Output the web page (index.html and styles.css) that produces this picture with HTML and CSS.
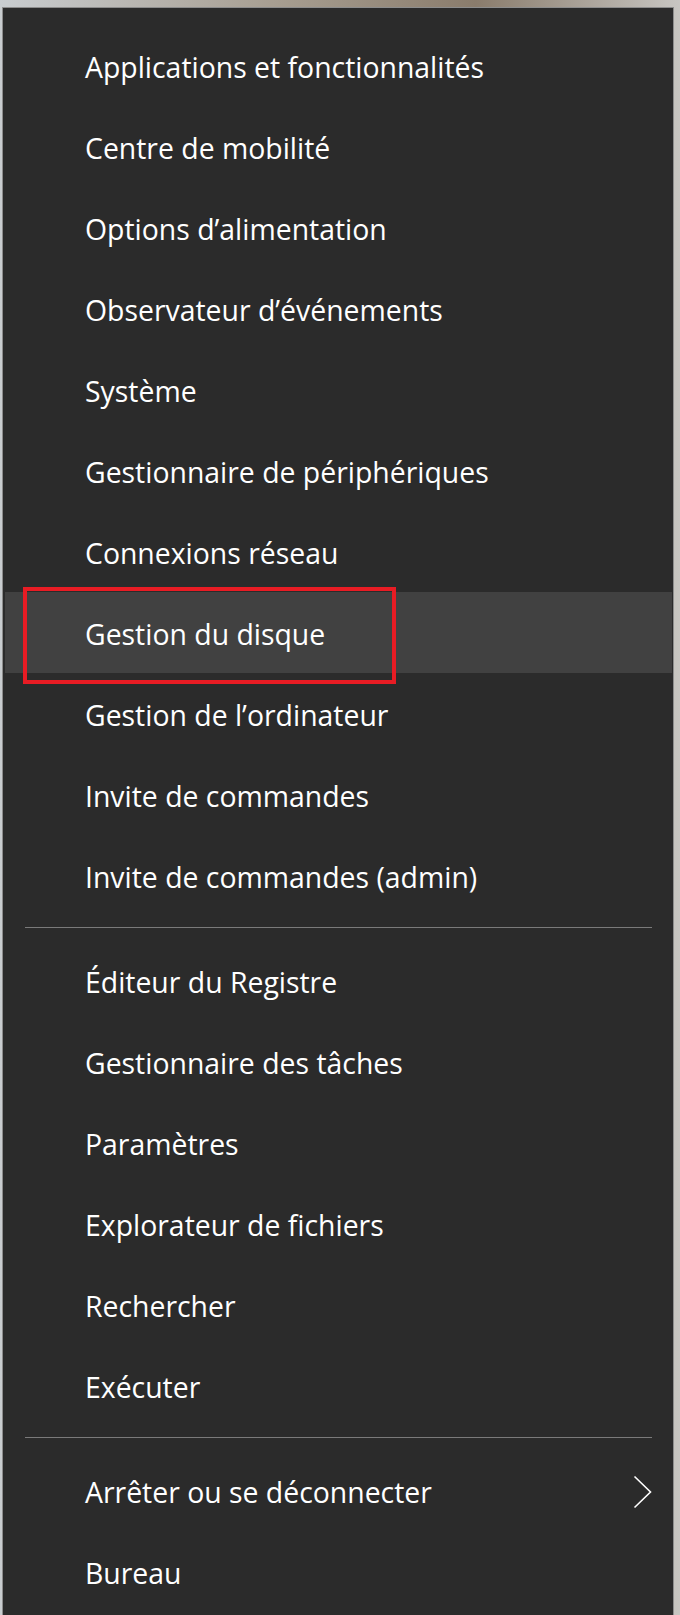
FILE: index.html
```html
<!DOCTYPE html>
<html>

<head>
    <title>Menu</title>
    <link rel="stylesheet" href="styles.css">
</head>

<body>
    <div class="menu">
        <div class="item">Applications et fonctionnalités</div>
        <div class="item">Centre de mobilité</div>
        <div class="item">Options d’alimentation</div>
        <div class="item">Observateur d’événements</div>
        <div class="item">Système</div>
        <div class="item">Gestionnaire de périphériques</div>
        <div class="item">Connexions réseau</div>
        <div class="item actif">Gestion du disque<span class="cadre"></span></div>
        <div class="item">Gestion de l’ordinateur</div>
        <div class="item">Invite de commandes</div>
        <div class="item">Invite de commandes (admin)</div>
        <div class="separateur"></div>
        <div class="item">Éditeur du Registre</div>
        <div class="item">Gestionnaire des tâches</div>
        <div class="item">Paramètres</div>
        <div class="item">Explorateur de fichiers</div>
        <div class="item">Rechercher</div>
        <div class="item">Exécuter</div>
        <div class="separateur"></div>
        <div class="item sous">
            Arrêter ou se déconnecter
            <svg class="chevron" width="20" height="34" viewBox="0 0 20 34">
                <polyline points="1.5,1.5 17.5,17 1.5,32.5" fill="none" stroke="#ffffff" stroke-width="1.6" />
            </svg>
        </div>
        <div class="item">Bureau</div>
    </div>
</body>

</html>
```

FILE: styles.css
```css
body {
    margin: 0;
    font-family: "Open Sans", "Noto Sans", sans-serif;
    background-color: #b9b6b0;
    background-image: linear-gradient(90deg, #c9cdd0 0%, #a89f92 40%, #8a7c6c 70%, #c8c6c2 100%);
    overflow: hidden;
}

.menu {
    margin: 7px 6px 0 2px;
    padding: 17px 0 40px 0;
    background-color: #2b2b2b;
    border: 1px solid #8d8d8d;
    border-bottom: none;
}

.item {
    position: relative;
    display: flex;
    align-items: center;
    height: 81px;
    margin: 0 1px 0 2px;
    padding: 2px 0 0 80px;
    box-sizing: border-box;
    font-size: 28.4px;
    color: #ffffff;
}

.actif {
    background-color: #414141;
}

.cadre {
    position: absolute;
    left: 18px;
    top: -5px;
    width: 373px;
    height: 97px;
    border: 4px solid #e81c24;
    box-sizing: border-box;
}

.sous {
    justify-content: space-between;
    padding-right: 19px;
}

.separateur {
    height: 1px;
    margin: 11px 21px 12px 22px;
    background-color: #7a7a7a;
}
```
